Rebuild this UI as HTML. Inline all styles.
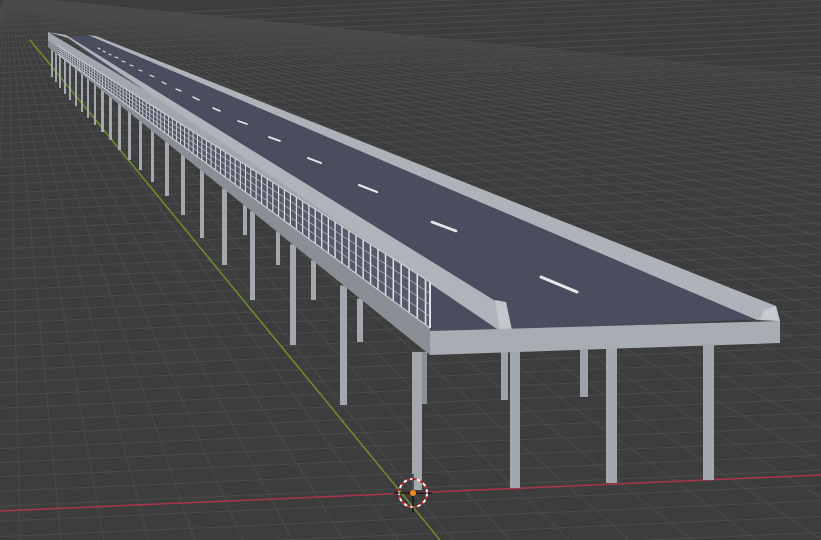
<!DOCTYPE html>
<html><head><meta charset="utf-8"><style>
html,body{margin:0;padding:0;background:#3d3d3d;overflow:hidden;width:821px;height:540px}
svg{display:block}
</style></head><body>
<svg id="s" width="821" height="540" viewBox="0 0 821 540" xmlns="http://www.w3.org/2000/svg">
<rect width="821" height="540" fill="#3d3d3d"/>
<g id="grid" stroke="#4b4b4b" stroke-width="1"></g>
<line x1="0" y1="511" x2="821" y2="475" stroke="#a8354a" stroke-width="1.5"/>
<line x1="30" y1="40" x2="440" y2="540" stroke="#6f8f2a" stroke-width="1.5"/>
<g id="cols"></g>
<!-- road -->
<polygon points="66,36 95,36 760,319 505,331 430,331" fill="#4a4d5e"/>
<!-- outer face of barrier -->
<polygon points="48,32 430,261 430,331 48,42" fill="#a2a6ad"/>
<!-- inner sliver of barrier -->
<polygon points="48,32 66,35 497,302 500,331 68,38" fill="#b0b4ba"/>
<!-- deck side -->
<polygon points="48,40 430,322 430,355 48,47" fill="#8a8e95"/>
<!-- fence -->
<polygon points="58,46 430,282 430,328 58,54" fill="#565a68"/>
<g id="fence" stroke="#dfe1e5"></g>
<polygon points="495,300 506,302 512,330 500,331" fill="#c3c6cb"/>
<!-- right barrier -->
<polygon points="88,35 96,36 776,306 780,321 757,320" fill="#aeb2b9"/>
<polygon points="764,310 776,306 780,321 760,320" fill="#c6c9ce"/>
<g id="dash"></g>
<!-- front face -->
<polygon points="430,331 780,321 780,343 430,355" fill="#a8acb3"/>
<!-- near columns -->
<rect x="412" y="352" width="10" height="138" fill="#a3a7ae"/>
<rect x="422" y="352" width="5" height="52" fill="#8c9097"/>
<rect x="501" y="352" width="7" height="48" fill="#9ea2a9"/>
<rect x="580" y="349" width="8" height="48" fill="#9ea2a9"/>
<rect x="510" y="352" width="10" height="136" fill="#a3a7ae"/>
<rect x="606" y="348" width="11" height="135" fill="#a3a7ae"/>
<rect x="703" y="344" width="11" height="136" fill="#a3a7ae"/>
<circle cx="413" cy="493" r="14" fill="none" stroke="#fff" stroke-width="2" stroke-dasharray="4 3"/>
<circle cx="413" cy="493" r="14" fill="none" stroke="#d42020" stroke-width="2" stroke-dasharray="3 4" stroke-dashoffset="3.5"/>
<line x1="413" y1="474" x2="413" y2="512" stroke="#000" stroke-width="1"/>
<line x1="394" y1="493" x2="432" y2="493" stroke="#000" stroke-width="1"/>
<circle cx="413" cy="493" r="3" fill="#f08c1a"/>
</svg>
<script>
var NS="http://www.w3.org/2000/svg";
function el(p,t,a){var e=document.createElementNS(NS,t);for(var k in a)e.setAttribute(k,a[k]);p.appendChild(e);return e;}
var g=document.getElementById('grid');
var vx=8,vy=-4;
for(var i=-30;i<60;i++){var bx=20+i*40+i*i*0.9;el(g,'line',{x1:vx,y1:vy,x2:vx+(bx-vx)*2,y2:vy+(544)*2});}
var y=20;while(y<600){el(g,'line',{x1:0,y1:y,x2:821,y2:y-36});y+=5+y*0.02;}
var c=document.getElementById('cols');
function db(x){return 46+(x-48)*0.808;}
var pts=[[340,405,7],[357,342,6],[290,345,6],[311,300,5],[250,300,5],[276,265,4],[222,265,5],[243,235,4],[200,238,4],[181,215,4],[165,196,4],[151,182,3],[139,170,3],[128,160,3],[118,150,3],[109,140,3],[101,132,3],[94,125,2],[87,118,2],[81,112,2],[75,106,2],[69,100,2],[64,94,2],[59,88,2],[55,82,2],[51,77,2]];
pts.forEach(function(p){var t=db(p[0]+p[2])-2;el(c,'rect',{x:p[0],y:t,width:p[2],height:p[1]-t,fill:'#a3a7ae'});});
var f=document.getElementById('fence');
for(var x=60;x<430;){var t=(x-58)/372;var yt=46+t*236,yb=54+t*274;el(f,'line',{x1:x,y1:yt,x2:x,y2:yb,'stroke-width':0.5+t*1.2});x+=2+t*6.5;}
el(f,'line',{x1:430,y1:282,x2:430,y2:328,'stroke-width':2});
for(var r=0;r<5;r++){var a=r/4;el(f,'line',{x1:58,y1:46+8*a,x2:430,y2:282+46*a,'stroke-width':r==0||r==4?1.2:0.6,stroke:'#c8cbd0'});}
var d=document.getElementById('dash');
var ds=[[541,277,577,292,3],[432,222,456,231,2.6],[359,185,377,192,2.2],[308,158,321,163,2],[269,137,280,141,1.8],[238,121,247,124,1.6],[213,108,220,111,1.5],[193,97,199,100,1.4],[176,89,181,91,1.3],[162,82,166,84,1.2],[150,75,154,77,1.1],[139,70,142,71,1],[130,65,133,66,1],[122,61,125,62,1],[115,57,118,58,1],[109,54,111,55,1],[103,51,105,52,1],[98,48,100,49,1]];
ds.forEach(function(q){el(d,'line',{x1:q[0],y1:q[1],x2:q[2],y2:q[3],stroke:'#e8e8e8','stroke-width':q[4],'stroke-linecap':'round'});});
</script>
</body></html>
